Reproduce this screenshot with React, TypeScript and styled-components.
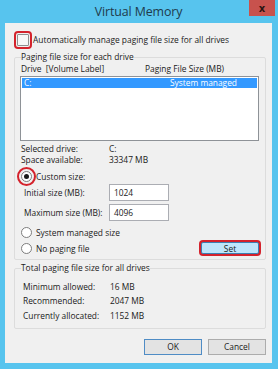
import React from "react";
import styled, { createGlobalStyle } from "styled-components";

const GlobalStyle = createGlobalStyle`
  html, body {
    margin: 0;
    padding: 0;
  }
  body {
    width: 278px;
    height: 369px;
    overflow: hidden;
    background: #57c4ee;
    font-family: "Open Sans", "Noto Sans", sans-serif;
    color: #1a1a1a;
  }
`;

const Frame = styled.div`
  width: 278px;
  height: 369px;
  box-sizing: border-box;
  background: #57c4ee;
  padding: 0 6px 6px 5px;
  display: flex;
  flex-direction: column;
`;

const TitleBar = styled.div`
  height: 23px;
  flex: none;
  display: flex;
  align-items: center;
  justify-content: center;
  position: relative;
`;

const Title = styled.span`
  font-size: 12.4px;
  color: #203a4c;
  letter-spacing: -0.1px;
`;

const CloseButton = styled.div`
  position: absolute;
  top: 0;
  right: -3px;
  width: 26px;
  height: 16px;
  background: #c8524d;
  display: flex;
  align-items: center;
  justify-content: center;
  color: #2b1512;
  font-size: 10px;
  font-weight: 700;
  font-family: "DejaVu Sans", sans-serif;
`;

const Client = styled.div`
  flex: 1;
  background: #f0f0f0;
  padding: 9px 6px 0 9px;
  display: flex;
  flex-direction: column;
  font-size: 8.4px;
`;

const CheckRow = styled.label`
  display: flex;
  align-items: center;
  height: 15px;
  padding-left: 3px;
`;

const Checkbox = styled.span`
  width: 10px;
  height: 10px;
  border: 1px solid #8f8f8f;
  background: #f7f7f7;
  border-radius: 1px;
  outline: 2px solid #d4222c;
  outline-offset: 1px;
  margin-right: 4px;
`;

const Group = styled.fieldset<{ $top: number; $bottom: number }>`
  margin: ${(p) => p.$top}px 0 0 0;
  padding: 0 6px ${(p) => p.$bottom}px 6px;
  border: 1px solid #dcdcdc;
  border-radius: 2px;
  min-width: 0;
`;

const Legend = styled.legend`
  padding: 0;
  line-height: 12px;
  font-size: 8.4px;
`;

const ListHeader = styled.div`
  display: grid;
  grid-template-columns: 124px 1fr;
  line-height: 11px;
`;

const ListBox = styled.div`
  margin: 2px 0 0 -1px;
  height: 65px;
  box-sizing: border-box;
  border: 1px solid #8e9297;
  background: #ffffff;
  padding: 1px;
`;

const ListRow = styled.div<{ $selected?: boolean }>`
  display: grid;
  grid-template-columns: 146px 1fr;
  height: 10px;
  line-height: 10px;
  padding-left: 2px;
  background: ${(p) => (p.$selected ? "#3399ff" : "transparent")};
  color: ${(p) => (p.$selected ? "#ffffff" : "inherit")};
`;

const InfoGrid = styled.div<{ $indent: number; $col: number; $row: number; $top: number }>`
  display: grid;
  grid-template-columns: ${(p) => p.$col}px 1fr;
  grid-auto-rows: ${(p) => p.$row}px;
  align-items: center;
  padding-left: ${(p) => p.$indent}px;
  margin-top: ${(p) => p.$top}px;
`;

const RadioRow = styled.label<{ $height: number; $top?: number }>`
  display: flex;
  align-items: center;
  height: ${(p) => p.$height}px;
  margin-top: ${(p) => p.$top ?? 0}px;
`;

const Radio = styled.span<{ $checked?: boolean; $marked?: boolean }>`
  width: 9px;
  height: 9px;
  border: 1px solid #7d7d7d;
  border-radius: 50%;
  background: #ffffff;
  margin-right: 4px;
  display: flex;
  align-items: center;
  justify-content: center;
  flex: none;
  outline: ${(p) => (p.$marked ? "2px solid #d4222c" : "none")};
  outline-offset: 2px;

  &::after {
    content: "";
    width: 5px;
    height: 5px;
    border-radius: 50%;
    background: #1a1a1a;
    display: ${(p) => (p.$checked ? "block" : "none")};
  }
`;

const SizeRow = styled.div<{ $top: number }>`
  display: grid;
  grid-template-columns: 85px 60px;
  align-items: center;
  padding-left: 3px;
  height: 17px;
  margin-top: ${(p) => p.$top}px;
`;

const SizeInput = styled.div`
  height: 17px;
  box-sizing: border-box;
  border: 1px solid #abadb3;
  background: #ffffff;
  padding: 0 4px;
  display: flex;
  align-items: center;
`;

const BottomRow = styled.div`
  display: flex;
  align-items: center;
  justify-content: space-between;
  height: 16px;
`;

const SetButton = styled.div`
  width: 58px;
  height: 12px;
  box-sizing: border-box;
  background: #bee5fb;
  border: 1px solid #3c7fb1;
  display: flex;
  align-items: center;
  justify-content: center;
  box-shadow: 0 0 0 2px #d4222c;
  border-radius: 2px;
`;

const Footer = styled.div`
  display: flex;
  justify-content: flex-end;
  gap: 6px;
  margin-top: 10px;
`;

const DialogButton = styled.div<{ $default?: boolean }>`
  width: 58px;
  height: 16px;
  box-sizing: border-box;
  background: #e3e3e3;
  border: 1px solid ${(p) => (p.$default ? "#4f8cc5" : "#acacac")};
  display: flex;
  align-items: center;
  justify-content: center;
`;

export default function App() {
  return (
    <>
      <GlobalStyle />
      <Frame>
        <TitleBar>
          <Title>Virtual Memory</Title>
          <CloseButton>x</CloseButton>
        </TitleBar>
        <Client>
          <CheckRow>
            <Checkbox />
            Automatically manage paging file size for all drives
          </CheckRow>

          <Group $top={4} $bottom={3}>
            <Legend>Paging file size for each drive</Legend>
            <ListHeader>
              <span>Drive&nbsp; [Volume Label]</span>
              <span>Paging File Size (MB)</span>
            </ListHeader>
            <ListBox>
              <ListRow $selected>
                <span>C:</span>
                <span>System managed</span>
              </ListRow>
            </ListBox>
            <InfoGrid $indent={0} $col={88} $row={11} $top={2}>
              <span>Selected drive:</span>
              <span>C:</span>
              <span>Space available:</span>
              <span>33347 MB</span>
            </InfoGrid>
            <RadioRow $height={14} $top={4}>
              <Radio $checked $marked />
              Custom size:
            </RadioRow>
            <SizeRow $top={1}>
              <span>Initial size (MB):</span>
              <SizeInput>1024</SizeInput>
            </SizeRow>
            <SizeRow $top={3}>
              <span>Maximum size (MB):</span>
              <SizeInput>4096</SizeInput>
            </SizeRow>
            <RadioRow $height={15} $top={4}>
              <Radio />
              System managed size
            </RadioRow>
            <BottomRow>
              <RadioRow $height={15}>
                <Radio />
                No paging file
              </RadioRow>
              <SetButton>Set</SetButton>
            </BottomRow>
          </Group>

          <Group $top={2} $bottom={5}>
            <Legend>Total paging file size for all drives</Legend>
            <InfoGrid $indent={2} $col={87} $row={14.5} $top={5}>
              <span>Minimum allowed:</span>
              <span>16 MB</span>
              <span>Recommended:</span>
              <span>2047 MB</span>
              <span>Currently allocated:</span>
              <span>1152 MB</span>
            </InfoGrid>
          </Group>

          <Footer>
            <DialogButton $default>OK</DialogButton>
            <DialogButton>Cancel</DialogButton>
          </Footer>
        </Client>
      </Frame>
    </>
  );
}
